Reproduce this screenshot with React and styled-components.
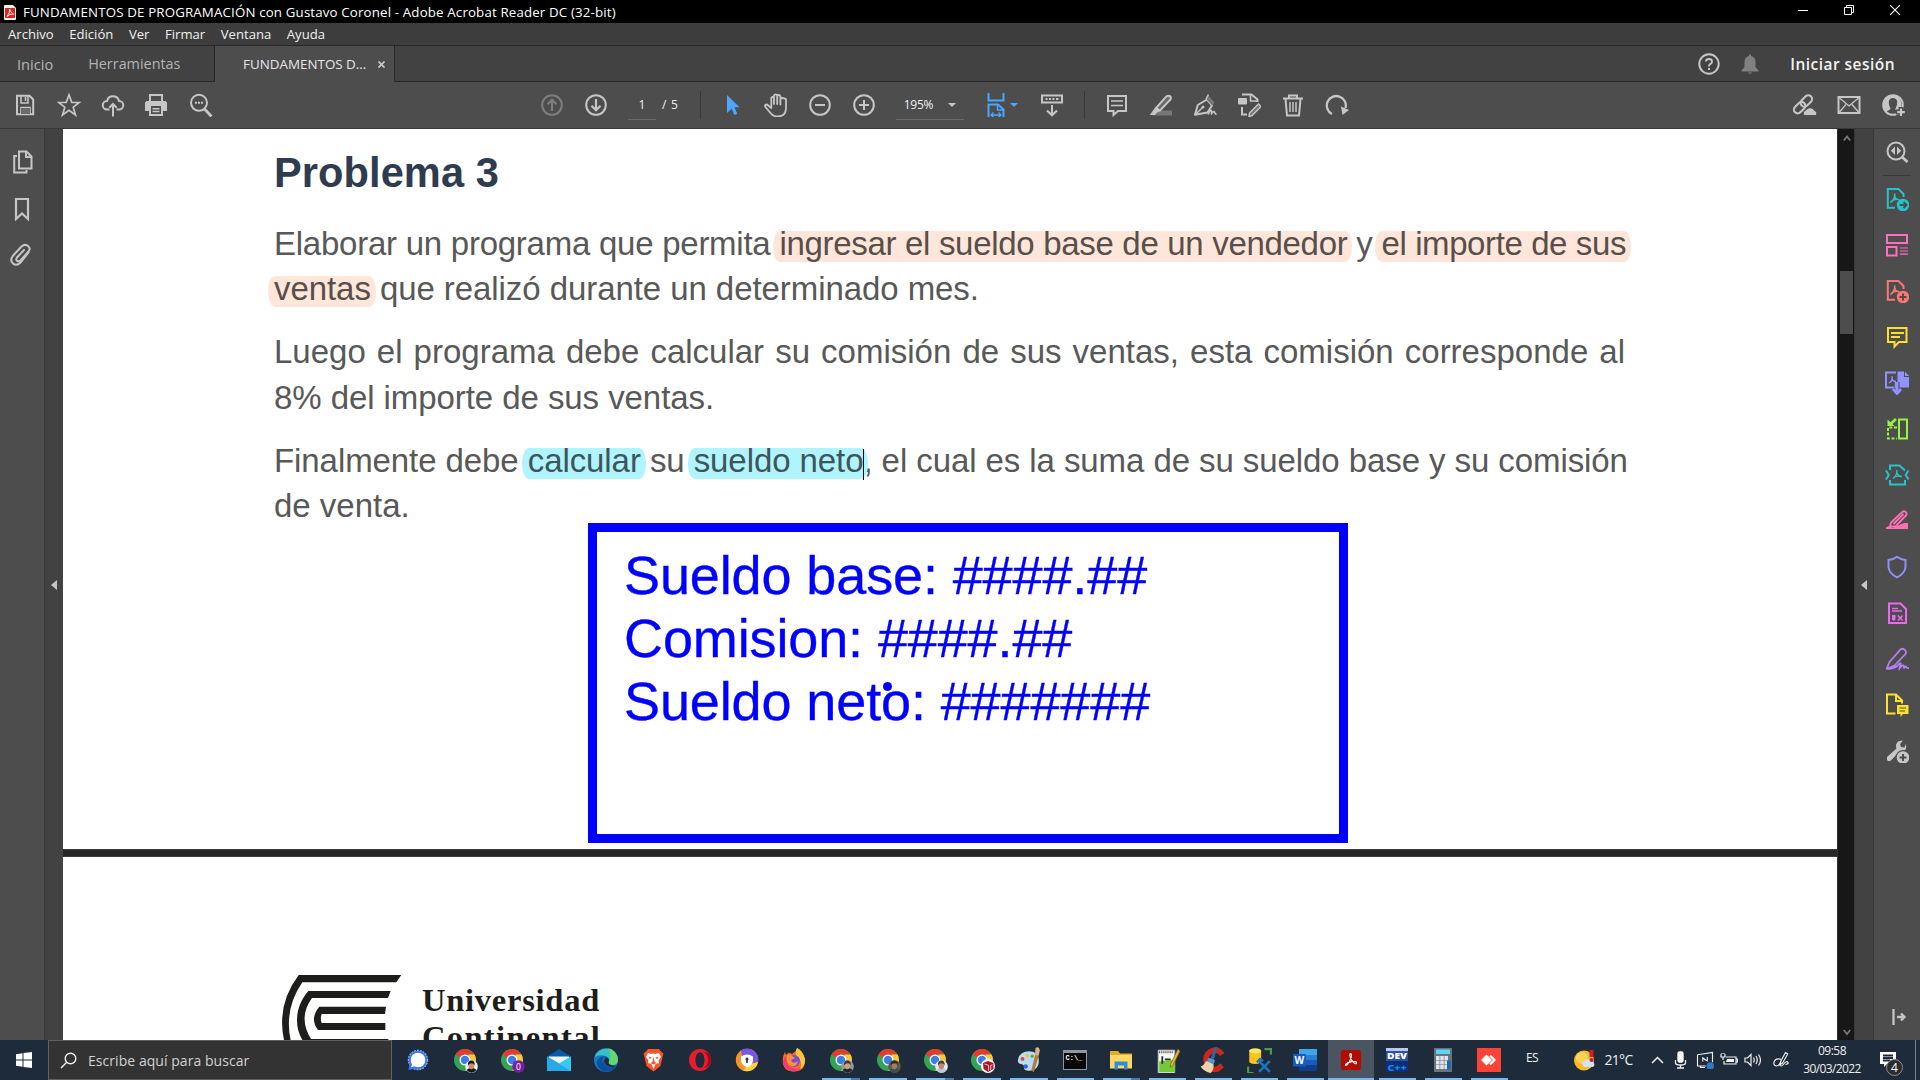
import React from "react";
import styled, { createGlobalStyle, css } from "styled-components";

const GlobalStyle = createGlobalStyle`
  * { box-sizing: border-box; }
  html, body { margin: 0; padding: 0; background: #000; overflow: hidden; }
  h1, p { margin: 0; font-weight: normal; }
`;

const Screen = styled.div`
  width: 1920px;
  height: 1080px;
  display: flex;
  flex-direction: column;
  overflow: hidden;
  font-family: "Open Sans", "Noto Sans", sans-serif;
  font-size: 12px;
  color: #f0f0f0;
  white-space: nowrap;
`;

const Row = styled.div`
  display: flex;
  align-items: center;
`;

const Label = styled.span`
  font-size: ${(p) => p.$size || 12}px;
  letter-spacing: ${(p) => p.$track || 0}px;
  color: ${(p) => p.$color || "inherit"};
  font-weight: ${(p) => p.$weight || 400};
  line-height: 16px;
`;

/* ---------- window chrome ---------- */

const TitleBar = styled(Row)`
  height: 23px;
  flex: none;
  background: #000;
  padding: 1px 0 0 4px;
  gap: 7px;
  color: #fff;
`;

const WindowButtons = styled(Row)`
  margin-left: auto;
  padding-right: 2px;
  padding-bottom: 4px;
`;

const WindowButton = styled.div`
  width: 46px;
  height: 20px;
  display: flex;
  align-items: center;
  justify-content: center;
`;

const MenuBar = styled(Row)`
  height: 23px;
  flex: none;
  background: #3d3d3d;
  border-bottom: 1px solid #282828;
  padding: 0 0 1px 8px;
  gap: 15.6px;
`;

const TabBar = styled.div`
  height: 36px;
  flex: none;
  display: flex;
  background: #424242;
`;

const TabGroup = styled(Row)`
  width: 215px;
  padding: 0 0 0 17px;
  gap: 35px;
  border-right: 1px solid #282828;
  border-bottom: 1px solid #282828;
`;

const ActiveTab = styled(Row)`
  width: 180px;
  padding: 0 9px 0 28px;
  justify-content: space-between;
  background: #4d4d4d;
  border-right: 1px solid #282828;
`;

const TabBarRest = styled(Row)`
  flex: 1;
  justify-content: flex-end;
  padding-right: 25px;
  border-bottom: 1px solid #282828;
`;

const ToolBar = styled(Row)`
  height: 47px;
  flex: none;
  background: #4d4d4d;
  border-bottom: 1px solid #383838;
  padding-left: 3px;
`;

const ToolCell = styled.div`
  width: ${(p) => p.$w || 44}px;
  height: ${(p) => p.$h || 46}px;
  flex: none;
  display: flex;
  align-items: center;
  justify-content: center;
  color: ${(p) => p.$color || "#c6c6c6"};
`;

const Space = styled.div`
  width: ${(p) => p.$w}px;
  flex: none;
`;

const Filler = styled.div`
  flex: 1;
`;

const Separator = styled.div`
  width: 1px;
  height: 28px;
  background: #383838;
`;

const Field = styled(Row)`
  width: ${(p) => p.$w}px;
  height: 29px;
  padding-top: 1px;
  justify-content: ${(p) => (p.$between ? "space-between" : "center")};
  padding-left: ${(p) => (p.$between ? 8 : 0)}px;
  padding-right: ${(p) => (p.$between ? 8 : 0)}px;
  border-bottom: 1px solid #6a6a6a;
`;

const Caret = styled.i`
  border: 4px solid transparent;
  border-top-color: ${(p) => p.$color || "#c6c6c6"};
  border-bottom: 0;
`;

/* ---------- workspace ---------- */

const Workspace = styled.div`
  height: 911px;
  flex: none;
  display: flex;
  background: #424242;
`;

const SideNav = styled.div`
  width: 45px;
  padding-top: 10px;
  background: #4d4d4d;
  border-right: 1px solid #383838;
`;

const Gutter = styled.div`
  width: ${(p) => p.$w}px;
  display: flex;
  align-items: center;
  justify-content: center;
`;

const Arrow = styled.i`
  border: 5px solid transparent;
  border-right: 6px solid #c6c6c6;
  border-left: 0;
`;

const Viewer = styled.div`
  position: relative;
  width: 1774px;
  display: flex;
  flex-direction: column;
  background: #262626;
  overflow: hidden;
`;

const FirstPage = styled.div`
  height: 720px;
  flex: none;
  padding: 20px 0 0 211px;
  background: #fff;
  font-family: "Liberation Sans", Arial, sans-serif;
`;

const PageGap = styled.div`
  height: 8px;
  flex: none;
  background: #262626;
  border: solid #403c3e;
  border-width: 1px 0;
`;

const SecondPage = styled.div`
  height: 183px;
  flex: none;
  display: flex;
  align-items: flex-start;
  padding: 118px 0 0 218px;
  gap: 20px;
  background: #fff;
  overflow: hidden;
`;

const Heading = styled.h1`
  font-size: 41.6px;
  line-height: 48px;
  font-weight: 700;
  letter-spacing: 0.07px;
  color: #2f3c50;
`;

const Paragraph = styled.p`
  width: 1353px;
  margin-top: ${(p) => p.$gap}px;
  font-size: 33px;
  line-height: ${(p) => p.$leading}px;
  color: #585858;
`;

const Line = styled.span`
  display: block;
  width: ${(p) => p.$w || 1353}px;
  ${(p) => p.$fill && css`text-align-last: justify;`}
  letter-spacing: ${(p) => p.$track || 0}px;
`;

const Mark = styled.span`
  position: relative;
  isolation: isolate;
  ${(p) => p.$track && css`letter-spacing: ${p.$track}px;`}
  color: ${(p) => (p.$cyan ? "#3d565a" : "#584f4b")};
  &::before {
    content: "";
    position: absolute;
    z-index: -1;
    top: 6px;
    bottom: 0;
    left: -6px;
    right: -5px;
    border-radius: 7px / 15px;
    background: ${(p) => (p.$cyan ? "#b0f4ff" : "#ffe6da")};
  }
  ${(p) =>
    p.$caret &&
    css`
      &::after {
        content: "";
        position: absolute;
        right: -1px;
        top: 7px;
        width: 1px;
        height: 31px;
        background: #000;
      }
    `}
`;

const Annotation = styled.div`
  position: absolute;
  left: 525px;
  top: 394px;
  width: 760px;
  height: 320px;
  padding: 12px 0 0 27px;
  border: 9px solid #0000ff;
  font: 54px/63px "Liberation Sans", Arial, sans-serif;
  letter-spacing: -0.12px;
  -webkit-text-stroke: 0.35px #0000ff;
  color: #0000ff;
`;

const PenDot = styled.i`
  position: absolute;
  left: 286px;
  top: 150px;
  width: 9px;
  height: 9px;
  border-radius: 50%;
  background: #0000ff;
`;

const University = styled.div`
  padding-top: 7px;
  font: 700 32.5px/37px "Liberation Serif", "Times New Roman", serif;
  color: #1d1d1b;
`;

const UniversityLine = styled.div`
  letter-spacing: ${(p) => p.$track}px;
`;

const ScrollTrack = styled.div`
  width: 18px;
  padding: 6px 1px 4px 2px;
  display: flex;
  flex-direction: column;
  align-items: center;
  background: #171717;
  border-right: 1px solid #383838;
  border-left: 1px solid #303030;
`;

const Thumb = styled.div`
  align-self: stretch;
  height: 63px;
  margin: 129px 0 auto;
  background: #4d4d4d;
`;

const ToolsPane = styled.div`
  flex: 1;
  display: flex;
  flex-direction: column;
  align-items: center;
  background: #4d4d4d;
  border-left: 1px solid #383838;
`;

const PaneRule = styled.div`
  width: 28px;
  height: 1px;
  background: #383838;
`;

/* ---------- taskbar ---------- */

const TaskBar = styled.div`
  height: 40px;
  flex: none;
  display: flex;
  background: #1d2b3a;
`;

const SearchBox = styled(Row)`
  width: 344px;
  height: 40px;
  padding: 1px 0 0 11px;
  gap: 11px;
  background: #333;
  border: 1px solid #606060;
  margin-right: 2px;
`;

const TaskApp = styled.div`
  width: ${(p) => p.$w}px;
  height: 40px;
  display: flex;
  align-items: center;
  justify-content: center;
  padding-left: ${(p) => (p.$w > 46 ? 1 : 0)}px;
  position: relative;
  background: ${(p) => (p.$active ? "#4a5561" : "transparent")};
`;

const RunningBar = styled.i`
  position: absolute;
  bottom: 0;
  left: ${(p) => (p.$active ? 0 : 5)}px;
  right: ${(p) => (p.$active ? 0 : 4)}px;
  height: 2px;
  background: ${(p) =>
    p.$stacked ? "linear-gradient(90deg, #76b9ed 77%, #4b7ca4 77%)" : "#76b9ed"};
`;

const TrayCell = styled.div`
  width: ${(p) => p.$w || 24}px;
  height: 40px;
  flex: none;
  display: flex;
  align-items: center;
  justify-content: center;
  padding-bottom: ${(p) => p.$up || 0}px;
`;

const Clock = styled.div`
  width: 72px;
  flex: none;
  padding-top: 3px;
  display: flex;
  flex-direction: column;
  gap: 2px;
  align-items: center;
`;

const Notification = styled.div`
  position: relative;
  width: 48px;
  height: 40px;
  flex: none;
  padding: 12px 0 0 12px;
  border-right: 1px solid #7b8590;
`;

const Badge = styled.span`
  position: absolute;
  left: 18px;
  top: 19px;
  width: 17px;
  height: 17px;
  border-radius: 50%;
  border: 1px solid #8a8f95;
  background: #2a2c30;
  font-size: 12px;
  line-height: 15px;
  text-align: center;
  color: #fff;
`;

/* ---------- drawings ---------- */

const Drawing = styled.svg`
  display: block;
  flex: none;
`;

const Svg = ({ size = 24, w, h, sw = 2, box = "0 0 24 24", children, ...rest }) => (
  <Drawing
    width={w || size}
    height={h || size}
    viewBox={box}
    fill="none"
    stroke="currentColor"
    strokeWidth={sw}
    {...rest}
  >
    {children}
  </Drawing>
);

const solid = { fill: "currentColor", stroke: "none" };
const acro = "M5.500 15.500C8 14 10 10.500 9.700 6.500M9.700 8.500C10 11 12 12.700 14.500 12.700M6 14.500C8 12.800 11 12 13.500 12.500";

const glyphs = {
  save: (
    <>
      <path d="M4 2.800H16.500L20.200 6.500V21.200H4Z" />
      <path d="M8 3V10H15V3M8 21V14.500H17V21" strokeWidth="1.600" />
      <path d="M12.500 4V8" strokeWidth="1.500" />
      <path d="M8 15H17V21H8Z" fill="#6c6c6c" stroke="none" />
    </>
  ),
  star: <path strokeWidth="1.700" d="M12 1.800L14.700 9.300L22.300 9.500L16.200 14.200L18.500 22L12 17.400L5.500 22L7.800 14.200L1.700 9.500L9.300 9.300Z" />,
  cloud: <path d="M8.500 16.500H6A4.200 4.200 0 0 1 6 8A6.200 6.200 0 0 1 18 8A4.200 4.200 0 0 1 18 16.500H15.500M12 23.500V11M8.300 14.700L12 11L15.700 14.700" />,
  print: (
    <g {...solid} transform="translate(-1 0)">
      <path d="M5 1H19V8H5ZM7 3V8H17V3Z" fillRule="evenodd" />
      <path fillRule="evenodd" d="M2.500 8H21.500L23 9.500V18H19V23H5V18H1V9.500ZM7 13V21H17V13Z" />
      <path d="M8.500 15H15.500V16.400H8.500ZM8.500 17.800H15.500V19.200H8.500Z" />
    </g>
  ),
  find: (
    <>
      <circle cx="10" cy="9.800" r="8" />
      <path d="M15.500 16L22.500 23.500" strokeWidth="2.800" />
      <path d="M6 9.800H8M9 9.800H11M12 9.800H14" />
    </>
  ),
  up: <><circle cx="12" cy="12" r="9.800" /><path d="M12 18V7M7.500 11.300L12 6.800L16.500 11.300" strokeWidth="2.200" /></>,
  down: <><circle cx="12" cy="12" r="9.800" /><path d="M12 6V17M7.500 12.700L12 17.200L16.500 12.700" strokeWidth="2.200" /></>,
  pointer: <path {...solid} d="M7 2L19.500 14.300H14.500L17.300 20.700L14.300 22L11.600 15.800L7 20Z" />,
  hand: <path strokeWidth="1.800" strokeLinejoin="round" strokeLinecap="round" d="M7.300 15V5.500Q7.300 3.800 8.600 3.800T10 5.500V11M10 11V3Q10 1.300 11.500 1.300T13.200 3V11M13.200 11V3.300Q13.300 2 14.700 2T16.400 3.500V11.500M16.400 11.500V6.500Q16.600 5 18 5T22 6V15Q22 23.500 13.500 23.500Q9 23.500 6.500 20L1 13.500Q.8 11.500 3 11.500L7.300 15" />,
  minus: <><circle cx="12" cy="12" r="9.800" /><path d="M7 12H17" /></>,
  plus: <><circle cx="12" cy="12" r="9.800" /><path d="M7 12H17M12 7V17" /></>,
  fit: (
    <>
      <path d="M4.500 0V7.500H19.500V0M4.500 24.500V11.500H14L19.500 16.500V24.500" strokeWidth="2" />
      <path d="M13.500 12V17H19" strokeWidth="1.500" />
      <path d="M7 22H17M9.500 19.500L7 22L9.500 24.300M14.500 19.500L17 22L14.500 24.300" strokeWidth="1.400" />
    </>
  ),
  scroll: (
    <>
      <path d="M2 2.500H22V9.500H2Z" />
      <path d="M5.500 6H7.500M9 6H11M12.500 6H14.500M16 6H18.500" />
      <path d="M12 12V22M7 17.500L12 22.300L17 17.500" />
    </>
  ),
  comment: <><path d="M3 3H21V18H13L8.500 22V18H3Z" /><path d="M6 8H18M6 12.500H18" strokeWidth="1.400" /></>,
  marker: (
    <>
      <path d="M8 17.500H23V22.500H4Z" fill="#777" stroke="none" />
      <path d="M20.500 3Q22.500 4 21.500 6.500L11 17.500L7 15L16.500 4.300Q18.500 2 20.500 3Z" fill="#6a6a6a" />
      <path {...solid} d="M6.500 14L11.500 18L8 19.500L6 22H.8Z" />
    </>
  ),
  sign: (
    <>
      <path d="M2 21.800L4.800 12L14 6.500L19 12.500L14.500 19.500Z" strokeLinejoin="round" />
      <path d="M2.500 21.500L9.500 14.500" strokeWidth="1.400" />
      <circle cx="10" cy="14" r="1.500" {...solid} />
      <path d="M14.500 1.500L21.500 9.500L19 12.500L12.800 5.500Z" fill="#777" stroke="none" />
      <path d="M13 6L15.500 1.500M15 21.500Q18 15.500 18.500 18T18 21.500Q21 17 21.500 19T23.500 21.500" strokeWidth="1.500" />
    </>
  ),
  edit: (
    <>
      <path d="M5 1.500H14.500L20.500 6.500V9M5 14V21.500H10" />
      <path d="M13.500 2V8H20" strokeWidth="1.600" />
      <rect x="1" y="5" width="9" height="6.500" rx="1" {...solid} />
      <path d="M21.500 11L24 13.500L15 22.500L12 23.500L12.500 20Z" fill="#777" strokeWidth="1.500" />
    </>
  ),
  trash: <><path d="M2 5.500H22M8 5V2.500H16V5M4.500 6L6 22.500H18L19.500 6" /><path d="M9 9V19M12 9V19M15 9V19" strokeWidth="1.500" /></>,
  rotate: <><path d="M7 21A9.500 9.500 0 1 1 20.500 15" strokeWidth="2.300" /><path {...solid} d="M24 17L16 13.500L17.500 22Z" /></>,
  link: (
    <>
      <g transform="rotate(-45 10 11)" strokeWidth="2.100">
        <rect x="-1.500" y="7.500" width="13" height="7.500" rx="3.700" />
        <rect x="8" y="7.500" width="13" height="7.500" rx="3.700" />
      </g>
      <path d="M11 22.500A3.500 3.500 0 0 1 13 17A4.800 4.800 0 0 1 21.500 17.500A3 3 0 0 1 23 22.500Z" fill="currentColor" stroke="#4d4d4d" strokeWidth="1" />
    </>
  ),
  mail: <><path d="M1.500 4H22.500V20H1.500Z" /><path d="M2.500 5L12 13L21.500 5M2.500 19L9 11.500M21.500 19L15 11.500" strokeWidth="1.300" /></>,
  user: (
    <g transform="translate(1 0)">
      <circle cx="11" cy="12" r="9.800" />
      <path {...solid} fillRule="evenodd" d="M11 2A10 10 0 0 0 3.500 18.500Q8.500 17 8.500 15.500Q6.500 12 6.800 8.500Q7.500 5 11 5T15.200 8.500Q15.500 12 13.500 15.500V17L17 18.500A10 10 0 0 0 11 2Z" />
      <path d="M19 14V23.500M14 19H24" stroke="#4d4d4d" strokeWidth="5" />
      <path d="M19 15.500V23M15.200 19.200H22.800" strokeWidth="2.200" />
    </g>
  ),
  help: (
    <>
      <circle cx="12" cy="12" r="9.700" />
      <path d="M9 9.500Q9 7 12 7T15 9.400Q15 11 13.400 11.800T12 14.500" strokeWidth="1.900" />
      <path d="M12 16V18" />
    </>
  ),
  bell: <path {...solid} d="M11 2.500H13V4Q17.500 5 17.500 10V15L20.500 18.500V19.500H3.500V18.500L6.500 15V10Q6.500 5 11 4ZM9.500 20.500H14.500L12 22Z" />,
  pages: (
    <>
      <path d="M8 1.500H15.500L20.500 6.500V18.500H8ZM15 2V7H20" />
      <path d="M6 6H3.200V22.500H15.500V20" />
    </>
  ),
  bookmark: <path d="M5 2H17V22L11 16.500L5 22Z" strokeWidth="2.200" />,
  clip: <path strokeLinecap="round" d="M18.500 9.500L10.500 19.500Q6.500 23.500 3 20.500T2.800 13L11.500 3.500Q15 .500 18 3T18.500 8.500L10.500 17.500Q8.500 19 7 17.700T7 14.500L14 7" />,
  searchTools: (
    <>
      <circle cx="11" cy="11" r="8.500" />
      <path d="M17 17L22.500 22" strokeWidth="2.800" />
      <path {...solid} d="M10 6.500V15L5.800 10.800ZM12 6.500V15L16.200 10.800Z" />
    </>
  ),
  exportPdf: (
    <>
      <path d="M10 20.800H2.800V2H13.500L18.500 7V10" /><path d={acro} strokeWidth="1.500" />
      <circle cx="18" cy="18" r="6.200" {...solid} />
      <path d="M14.500 18H21M18.500 15L21.500 18L18.500 21" stroke="#4d4d4d" />
    </>
  ),
  organize: <><path d="M2 2H22V10H2ZM2 14H11.500V22.500H2Z" /><path d="M15 15H23M15 18H23M15 21.200H23" strokeWidth="1.200" /></>,
  createPdf: (
    <>
      <path d="M10 20.800H2.800V2H13.500L18.500 7V10" /><path d={acro} strokeWidth="1.500" />
      <circle cx="18" cy="18" r="6.200" {...solid} />
      <path d="M14.500 18H21.500M18 14.500V21.500" stroke="#4d4d4d" />
    </>
  ),
  note: <><path d="M3 3H21.500V17H14L9.500 21.500V17H3Z" /><path d="M6 8H19M6 12H15" strokeWidth="1.800" /></>,
  combine: (
    <>
      <path d="M9 16.500H1V1.500H11" /><path d="M4 12C6 11 7.500 8 7 5M7 8Q8 10.500 11 10.500" strokeWidth="1.300" />
      <path {...solid} d="M12.500 .5H19V6H24V16.500H14.500V11H9.700V17H12.500Z" /><path {...solid} d="M20 .5L24 5H20Z" />
      <path d="M12 11V21M8 18L12 22.500L16 18" strokeWidth="2.800" />
    </>
  ),
  compress: (
    <>
      <path d="M14 2.500H22V21.500H14Z" />
      <path d="M12 10.500H3V21.500H12" strokeDasharray="3 1.700" />
      <path d="M11 2L5 7.500" strokeWidth="2.500" /><path {...solid} d="M2.500 2.500V9H9.500Z" />
    </>
  ),
  protectPdf: (
    <>
      <path d="M5 7V2.500H14.500L20 7.500M5 17V21.500H20V17M1 7.500L3.800 12L1 16.500M23.500 7.500L20.700 12L23.500 16.500" />
      <path d="M8 15.500Q12 13 12 7M12 10Q13 13 17 13.500M9 14Q13 12.500 16.500 13.500" strokeWidth="1.400" />
    </>
  ),
  redact: (
    <>
      <path d="M20.500 2.800Q22.500 4 21 6.500L10.500 17.500L5 17.500L6 13.500L16.500 3.700Q18.500 1.500 20.500 2.800ZM8.500 15L18.500 5" strokeWidth="1.900" />
      <path {...solid} d="M5 16.500L7.500 19L19 14H23V20H1V18.500Z" />
    </>
  ),
  shield: <path d="M12 1.800Q16 5 20.500 5V12Q20 18.500 12 22.300Q4 18.500 3.500 12V5Q8 5 12 1.800Z" />,
  form: (
    <>
      <path d="M4 2.500H15.500L21 8V22H4Z" />
      <path d="M7 7.500H13M7 10H17" strokeWidth="1.300" />
      <path d="M7 14H10.500V18.500L8.700 20L7 18.500Z" {...solid} /><path d="M13 14.500L17.500 19.500M17.500 14.500L13 19.500" strokeWidth="1.600" />
    </>
  ),
  fillSign: <path d="M1.500 22L4.500 15L15.500 2.500Q18 .8 20 3T20 7.500L9.500 18.500L1.500 22Q11 22 14.500 16.500Q16.500 15.500 15.500 18T14.500 21.500Q17.500 17.500 18.500 18.500T18.500 21.500Q21 18.500 21.200 20T24 21" strokeWidth="1.800" />,
  sendNote: (
    <>
      <path d="M10.500 20.500H2V1.500H11L17 7.500V10.500M11 2V8H17" />
      <path {...solid} d="M12 12H23.500V21H18L15.500 24V21H12Z" /><path d="M14.500 15H21M14.500 18H20" stroke="#4d4d4d" strokeWidth="1.200" />
    </>
  ),
  moreTools: (
    <>
      <path {...solid} d="M2 18L11.500 9.500Q9.500 5 14 2L18 1.500L15 5L16 8L19.500 8.500L20.500 5Q23 11 17 13L14 13L6 21.500Q3 23 2 21Z" />
      <circle cx="18" cy="18.500" r="7.500" fill="#4d4d4d" stroke="none" />
      <circle cx="18" cy="18.500" r="6.300" {...solid} /><path d="M14.500 18.500H21.500M18 15V22" stroke="#4d4d4d" />
    </>
  ),
  expand: (
    <>
      <path d="M8.500 4V20" strokeWidth="2.300" />
      <path d="M12 12H19.500M16 8.500L19.500 12L16 15.500" strokeWidth="2.300" />
    </>
  ),
};

const Glyph = ({ name, size = 24 }) => <Svg size={size}>{glyphs[name]}</Svg>;

const Chrome = ({ children }) => (
  <Svg size={26} box="-1 -1 26 26" stroke="none">
    <circle cx="12" cy="12" r="11" fill="#34a353" />
    <path d="M12 12L2.500 6.500A11 11 0 0 1 21.500 6.500H12Z" fill="#e33b2e" />
    <path d="M21.500 6.500A11 11 0 0 1 12 23L17 14.500L15.500 6.500Z" fill="#fcc934" />
    <circle cx="12" cy="12" r="5.500" fill="#fff" />
    <circle cx="12" cy="12" r="4.200" fill="#3b7ded" />
    {children}
  </Svg>
);

const Portrait = ({ bg, hair, skin, suit }) => (
  <>
    <circle cx="18.500" cy="18.500" r="6.300" fill={bg} />
    <path d="M13.500 22Q18.500 17 23.500 22Q18.500 27.500 13.500 22Z" fill={suit} />
    <ellipse cx="18.300" cy="17.500" rx="2.900" ry="3.800" fill={skin} />
    <path d="M15 17.500Q14.500 12.500 18.300 12.500T21.700 17.500Q20.500 15 18.300 15.300T15 17.500Z" fill={hair} />
  </>
);

const svgText = { fontFamily: "Open Sans, sans-serif", stroke: "none" };

const art = {
  signal: (
    <Svg size={22}>
      <circle cx="12" cy="12" r="10.500" fill="#3a76f0" stroke="#8fb3f9" strokeWidth="1.300" strokeDasharray="2 1.200" />
      <path d="M1.500 23L3 16L9 21.500Z" fill="#3a76f0" stroke="none" />
      <circle cx="12" cy="12" r="8" fill="#fff" stroke="none" /><path d="M4.500 20L6 15L9 18.500Z" fill="#fff" stroke="none" />
    </Svg>
  ),
  chromeA: <Chrome><Portrait bg="#f2f2f2" hair="#1b1613" skin="#c98f6f" suit="#17191d" /></Chrome>,
  chromeO: (
    <Chrome>
      <circle cx="18.500" cy="18.500" r="6.200" fill="#7b1fa2" />
      <text x="18.500" y="21.700" fontSize="8.500" fill="#fff" textAnchor="middle" {...svgText}>0</text>
    </Chrome>
  ),
  mail: (
    <Svg w={24} h={24} stroke="none">
      <path d="M0 8.500L12 1L24 8.500V22H0Z" fill="#0a5aa8" /><path d="M2 8.500H22V16H2Z" fill="#f4f6f8" />
      <path d="M0 8.500L12 15.500L0 23Z" fill="#1c8de0" /><path d="M0 23L24 8.500V23Z" fill="#33c3f5" /><path d="M0 8.500L12 15.800L24 23H0Z" fill="#27a8ea" />
      <path d="M12 15.600L24 8.500V23Z" fill="#35c9f8" />
    </Svg>
  ),
  edge: (
    <Svg size={24} stroke="none">
      <circle cx="12" cy="12" r="12" fill="#1577c9" />
      <path d="M.5 9.500A12 12 0 0 1 24 11.500Q24 16.500 19 17Q14.500 17 14.500 14.500Q17 10.500 11.500 8Q5 6 .5 9.500Z" fill="#34bfc9" />
      <path d="M14 .3A12 12 0 0 1 24 12Q23.500 16.500 19 17Q14.500 17 14.500 14.500Q18.500 8 14 .3Z" fill="#66d66a" />
      <path d="M8 15.500Q8 9.500 12.500 8.800Q6 7.500 3 12.500Q1.500 19 9.500 23.500Q18 25 22 18Q17 20.500 13 18.500T10 12Q8 13.500 8 15.500Z" fill="#0c4fa1" />
      <path d="M12.500 9Q9.500 10.500 10.300 14.500T19.500 19.500L22.500 17.500Q19.500 18 17 17T14.500 14.500Q16.500 11.500 12.500 9Z" fill="#1d2b3a" />
    </Svg>
  ),
  brave: (
    <Svg w={21} h={24} box="0 0 21 24" stroke="none">
      <path d="M5 1H16L18 3.500L20.500 5.500L19.500 9L17.500 18L10.500 23.500L3.500 18L1.500 9L.5 5.500L3 3.500Z" fill="#fb542b" />
      <path d="M5 5L8.500 6L10.500 5.500L12.500 6L16 5L18 9L15.500 12.500L16 15L12.500 16L10.500 21L8.500 16L5 15L5.500 12.500L3 9Z" fill="#fff" />
      <path d="M5.500 8.500L8.500 9.500L7 11.500ZM15.500 8.500L12.500 9.500L14 11.500ZM10.500 9L11.700 14L13.500 15L10.500 16.500L7.500 15L9.300 14Z" fill="#fb542b" />
    </Svg>
  ),
  opera: (
    <Svg size={24} stroke="none">
      <path fillRule="evenodd" fill="#e81c2e" d="M12 1A11 11 0 1 0 12 23A11 11 0 1 0 12 1ZM12 4.200C15 4.200 16.500 8 16.500 12S15 19.800 12 19.800S7.500 16 7.500 12S9 4.200 12 4.200Z" />
      <path d="M14 3Q20 5 20 12T14 21Q22.500 19 23 12T14 3Z" fill="#a70014" />
    </Svg>
  ),
  securebrowser: (
    <Svg size={24} stroke="none">
      <circle cx="12" cy="12" r="11.200" fill="#f79327" /><path d="M6 2.500A11.200 11.200 0 0 1 23 14L16 16L7 8Z" fill="#7657e8" />
      <path d="M23 14A11.200 11.200 0 0 1 8 22.500L15 16Z" fill="#ffd23d" />
      <path d="M6 8.500Q12 4.500 18 8.500V13Q17 17.500 12 19.500Q7 17.500 6 13Z" fill="#fff" />
      <path d="M12 9.500A1.600 1.600 0 0 1 13 12.300L12.700 15H11.300L11 12.300A1.600 1.600 0 0 1 12 9.500Z" fill="#323264" />
    </Svg>
  ),
  firefox: (
    <Svg size={24} stroke="none">
      <path d="M3 4L4 7L7 4.500L10 6L14 3L15 0Q21 3 23 11Q23.500 23.500 12 23.500T.8 12Q1 7 3 4Z" fill="#ff6b2c" />
      <path d="M15 0Q21 3 23 11Q23.500 18 18 21.500Q21 13 15.500 9Q12 5 15 0Z" fill="#ffc83a" />
      <path d="M1 14Q3 23.500 12 23.500Q17 23 20 20Q12 22 7 18Q4 14 4 8Q1 11 1 14Z" fill="#f43a73" />
      <circle cx="12" cy="13" r="6" fill="#7a4fd8" /><path d="M5 7.500Q8 6 10 8L13 10L9 12L10 14Q13 16 16 13Q15 19 10 18T5 12Z" fill="#ff9136" />
    </Svg>
  ),
  chromeB: <Chrome><Portrait bg="#8c9aa4" hair="#3d3a38" skin="#d59b79" suit="#20242d" /></Chrome>,
  chromeC: <Chrome><Portrait bg="#5e5a45" hair="#332b22" skin="#9f7d5f" suit="#3e4d55" /></Chrome>,
  chromeD: <Chrome><Portrait bg="#e6ecf3" hair="#4c4039" skin="#c8876d" suit="#b9c9e0" /></Chrome>,
  chromeE: (
    <Chrome>
      <circle cx="18" cy="18" r="7" fill="#fff" />
      <path d="M13 15L18 13L23.500 15V21L18 24L13.500 21Z" fill="#b51227" /><path d="M14.500 16L18.500 17.300V22.500M20.700 22V17.500L22.500 16.800" stroke="#fff" strokeWidth=".8" />
    </Chrome>
  ),
  paint: (
    <Svg size={26} stroke="none">
      <path d="M2 11Q4 4 12 4T21 11Q22 21 12 22Q7 22 7.500 19T3.500 15.500Q1 14 2 11Z" fill="#b9dcf2" />
      <circle cx="6" cy="11" r="1.800" fill="#e3443a" /><circle cx="10.500" cy="8" r="1.700" fill="#f6c636" /><circle cx="15" cy="8.500" r="1.600" fill="#54af4c" /><circle cx="9" cy="18" r="2" fill="#3767c7" />
      <path d="M19.500 0Q23 2 21 8L16.500 23Q14 22 14.500 20Z" fill="#b8793b" /><path d="M18 1Q21-1 22 3L20.500 8L17.500 7Z" fill="#d9b381" />
    </Svg>
  ),
  terminal: (
    <Svg w={24} h={20} box="0 0 24 20" stroke="none">
      <rect width="24" height="20" fill="#8e979d" /><rect x="1" y="3" width="22" height="16" fill="#080808" />
      <text x="2.500" y="10" fontSize="7" fontWeight="700" fill="#fff" fontFamily="Liberation Mono, monospace">C:\_</text>
    </Svg>
  ),
  folder: (
    <Svg size={24} stroke="none">
      <path d="M1 3H9L11 5.500H23V20H1Z" fill="#e9a92d" /><path d="M1 7H23V20.500H1Z" fill="#ffd766" />
      <path d="M5.500 21.500V13.500H18.500V21.500H15V17.500H9V21.500Z" fill="#2f8fdb" />
    </Svg>
  ),
  notepad: (
    <Svg size={25} stroke="none">
      <path d="M3 2H19V24H3Z" fill="#f4f7f0" stroke="#a6aea0" strokeWidth=".8" /><path d="M4 13L19 11V23H4Z" fill="#73c937" />
      <path d="M4 4H18" stroke="#444" strokeDasharray="1 1" /><path d="M7 8V15M9.500 11H15" stroke="#24321d" strokeWidth="1.700" />
      <path d="M22 1L24 3L17 17L14.500 18.500L15 15.500Z" fill="#f0b429" stroke="#705619" strokeWidth=".6" />
    </Svg>
  ),
  cleaner: (
    <Svg size={26} stroke="none">
      <path d="M20.500 7Q16 .5 10 4T6 15Q9 22 16 20.500L20.500 17" stroke="#c9281f" strokeWidth="5" />
      <path d="M14 0L16 1L12.500 12L9.500 11Z" fill="#2c69aa" /><path d="M8 10L14 12L12.500 16L6 14Z" fill="#5297d3" /><path d="M5.500 13L12.500 16Q13 21 10 24Q4 23 .5 18Q4 17 5.500 13Z" fill="#f0d3a6" />
    </Svg>
  ),
  dbtool: (
    <Svg size={26} stroke="none">
      <path d="M3 3V14Q8 17.500 14 14V3Z" fill="#f7c51e" /><ellipse cx="8.500" cy="3.500" rx="5.500" ry="2.300" fill="#ffe46b" />
      <path d="M17 2H23V7M2 18V24H7" stroke="#4d9a44" strokeWidth="2" />
      <path d="M12 13L22 23M22 13L12 23" stroke="#1f72bd" strokeWidth="2.400" /><path d="M10 14L13 11L16 13" stroke="#1f72bd" strokeWidth="2" />
    </Svg>
  ),
  word: (
    <Svg size={24} stroke="none">
      <path d="M6 1H24V7H6Z" fill="#41a5ee" /><path d="M6 7H24V12H6Z" fill="#2b7cd3" /><path d="M6 12H24V17H6Z" fill="#185abd" /><path d="M6 17H24V23H6Z" fill="#103f91" />
      <rect y="6" width="13" height="12.500" rx="1" fill="#185abd" /><text x="6.400" y="16" fontSize="10" fontWeight="700" fill="#fff" textAnchor="middle" {...svgText}>W</text>
    </Svg>
  ),
  acrobat: (
    <Svg w={22} h={22} stroke="none">
      <rect x="1" y="1" width="22" height="22" rx="3.500" fill="#b30b00" />
      <path d="M11.500 5Q13 5 12.300 8.500Q11 14 7.500 17.500Q5.500 18.500 6 16.800Q8 14.500 13 13.800T18 15Q18.500 16.800 16 15.800Q12.500 13.500 11.200 9Q10.300 5 11.500 5Z" stroke="#fff" strokeWidth="1.200" fill="none" />
    </Svg>
  ),
  devcpp: (
    <Svg size={24} stroke="none">
      <rect x="1" y="0" width="22" height="24" rx="1" fill="#2c52a8" /><path d="M1 13H23V24H1Z" fill="#0c2f7d" /><path d="M1 0H23V3H1Z" fill="#b9c8ee" />
      <text x="12" y="10.500" fontSize="8.500" fontWeight="800" textAnchor="middle" textLength="20" lengthAdjust="spacingAndGlyphs" fill="#fff" fontFamily="Open Sans, sans-serif">DEV</text>
      <text x="12" y="22.500" fontSize="8.500" fontWeight="800" textAnchor="middle" textLength="19" lengthAdjust="spacingAndGlyphs" fill="#1f86dc" {...svgText}>C++</text>
    </Svg>
  ),
  calc: (
    <Svg w={18} h={24} box="0 0 18 24" stroke="none">
      <rect width="18" height="24" fill="#68737c" /><rect x="2" y="1.500" width="14" height="4.500" fill="#5dd4f4" />
      {[8, 12.500, 17].map((y) => [2, 6.200, 10.400].map((x) => <rect key={x + "-" + y} x={x} y={y} width="3.600" height="4" fill="#dfe5e9" />))}
      <rect x="13" y="12.500" width="3.600" height="9" fill="#1769b4" />
    </Svg>
  ),
  anydesk: (
    <Svg size={24} stroke="none">
      <rect width="24" height="24" fill="#fd4338" /><path d="M4 12L9.500 6.500L15 12L9.500 17.500Z" fill="#fff" /><path d="M13 7.500L17.500 12L13 16.500" stroke="#fff" strokeWidth="2.200" />
    </Svg>
  ),
};

/* ---------- content ---------- */

const menus = ["Archivo", "Edición", "Ver", "Firmar", "Ventana", "Ayuda"];

const paneTools = [
  ["exportPdf", "#25c3cb"],
  ["organize", "#ff6fbe"],
  ["createPdf", "#ff7578"],
  ["note", "#ffdf2e"],
  ["combine", "#9292ff"],
  ["compress", "#96f442"],
  ["protectPdf", "#25c3cb"],
  ["redact", "#ff6fb4"],
  ["shield", "#9090fa"],
  ["form", "#ec68f0"],
  ["fillSign", "#b47fee"],
  ["sendNote", "#ffdf2e"],
  ["moreTools", "#c6c6c6"],
];

const taskApps = [
  { icon: "signal", w: 47 },
  { icon: "chromeA", w: 47 },
  { icon: "chromeO", w: 47 },
  { icon: "mail", w: 47 },
  { icon: "edge", w: 47 },
  { icon: "brave", w: 47 },
  { icon: "opera", w: 47 },
  { icon: "securebrowser", w: 47 },
  { icon: "firefox", w: 47 },
  { icon: "chromeB", w: 47, running: true, stacked: true },
  { icon: "chromeC", w: 47, running: true },
  { icon: "chromeD", w: 47, running: true, stacked: true },
  { icon: "chromeE", w: 47, running: true },
  { icon: "paint", w: 47, running: true },
  { icon: "terminal", w: 46, running: true },
  { icon: "folder", w: 46, running: true, stacked: true },
  { icon: "notepad", w: 46, running: true },
  { icon: "cleaner", w: 46, running: true },
  { icon: "dbtool", w: 46, running: true },
  { icon: "word", w: 46, running: true },
  { icon: "acrobat", w: 46, running: true, active: true },
  { icon: "devcpp", w: 46, running: true },
  { icon: "calc", w: 46, running: true },
  { icon: "anydesk", w: 46, running: true },
];

const Tool = ({ name, ...rest }) => (
  <ToolCell {...rest}>
    <Glyph name={name} />
  </ToolCell>
);

const Header = () => (
  <>
    <TitleBar>
      <Svg w={12} h={15} box="0 0 12 15" stroke="none">
        <path d="M0 1Q0 0 1 0H9L12 3V14Q12 15 11 15H1Q0 15 0 14Z" fill="#f5f0ef" />
        <path d="M1 3H11V13H1Z" fill="#e2231a" /><path d="M3 11.500Q6 8 5.700 4Q6.500 8 9.500 9Q6 8.500 3 11.500Z" stroke="#fff" strokeWidth=".9" />
      </Svg>
      <Label $size={13.3} $track={0.15}>FUNDAMENTOS DE PROGRAMACIÓN con Gustavo Coronel - Adobe Acrobat Reader DC (32-bit)</Label>
      <WindowButtons>
        <WindowButton><Svg size={10} box="0 0 10 10" sw={1}><path d="M0 5.500H10" /></Svg></WindowButton>
        <WindowButton><Svg size={10} box="0 0 10 10" sw={1}><path d="M.5 2.500H7.500V9.500H.5ZM2.500 2.500V.5H9.500V7.500H7.500" /></Svg></WindowButton>
        <WindowButton><Svg size={10} box="0 0 10 10" sw={1.100}><path d="M0 0L10 10M10 0L0 10" /></Svg></WindowButton>
      </WindowButtons>
    </TitleBar>
    <MenuBar>
      {menus.map((m) => <Label key={m} $size={13.1}>{m}</Label>)}
    </MenuBar>
    <TabBar>
      <TabGroup>
        <Label $size={14.6} $color="#b4b4b4">Inicio</Label>
        <Label $size={14.4} $color="#b4b4b4">Herramientas</Label>
      </TabGroup>
      <ActiveTab>
        <Label $size={13.4} $color="#e6e6e6">FUNDAMENTOS D...</Label>
        <Svg size={7} box="0 0 8 8" sw={2} color="#c6c6c6"><path d="M.5 .5L7.500 7.500M7.500 .5L.5 7.500" /></Svg>
      </ActiveTab>
      <TabBarRest>
        <Tool name="help" $w={41} $h={34} />
        <Tool name="bell" $w={41} $h={34} $color="#808080" />
        <Space $w={20} />
        <Label $size={15.5} $weight={600} $track={0.46} $color="#f2f2f2">Iniciar sesión</Label>
      </TabBarRest>
    </TabBar>
    <ToolBar>
      {["save", "star", "cloud", "print", "find"].map((n) => <Tool key={n} name={n} />)}
      <Space $w={307} />
      <Tool name="up" $color="#7d7d7d" />
      <Tool name="down" />
      <Space $w={10} />
      <Field $w={28}><Label>1</Label></Field>
      <Space $w={6} />
      <Label $track={0.8}>/ 5</Label>
      <Space $w={12} />
      <ToolCell $w={19}><Separator /></ToolCell>
      <Tool name="pointer" $color="#4aa6ff" />
      <Tool name="hand" />
      <Tool name="minus" />
      <Tool name="plus" />
      <Space $w={10} />
      <Field $w={68} $between><Label $track={-0.3}>195%</Label><Caret /></Field>
      <Space $w={20} />
      <ToolCell $w={24} $color="#4aa6ff"><Glyph name="fit" /></ToolCell>
      <Space $w={2} />
      <Caret $color="#4aa6ff" />
      <Space $w={12} />
      <Tool name="scroll" />
      <ToolCell $w={21}><Separator /></ToolCell>
      {["comment", "marker", "sign", "edit", "trash", "rotate"].map((n) => <Tool key={n} name={n} />)}
      <Space $w={424} />
      {["link", "mail", "user"].map((n) => <Tool key={n} name={n} />)}
    </ToolBar>
  </>
);

const Document = () => (
  <Viewer>
    <FirstPage>
      <Heading>Problema 3</Heading>
      <Paragraph $gap={24} $leading={45}>
        <Line $fill $w={1352} $track={-0.25}>
          Elaborar un programa que permita <Mark $track={-0.31}>ingresar el sueldo base de un vendedor</Mark> y <Mark $track={-0.4}>el importe de sus</Mark>
        </Line>
        <Line $track={-0.07}><Mark>ventas</Mark> que realizó durante un determinado mes.</Line>
      </Paragraph>
      <Paragraph $gap={17.5} $leading={46}>
        <Line $fill $w={1351}>Luego el programa debe calcular su comisión de sus ventas, esta comisión corresponde al</Line>
        <Line $track={-0.07}>8% del importe de sus ventas.</Line>
      </Paragraph>
      <Paragraph $gap={17.4} $leading={45}>
        <Line $fill $w={1353} $track={-0.08}>
          Finalmente debe <Mark $cyan>calcular</Mark> su <Mark $cyan $caret>sueldo neto</Mark>, el cual es la suma de su sueldo base y su comisión
        </Line>
        <Line>de venta.</Line>
      </Paragraph>
    </FirstPage>
    <PageGap />
    <SecondPage>
      <Svg w={121} h={65} box="63 75 363 195" fill="#1d1d1b" stroke="none">
        <path d="M116 75H424L409 97H127Q66 186 97 290H77Q43 172 116 75Z" />
        <path d="M145 123H392L384 144H156C125 185 128 230 155 270H127C100 225 108 165 145 123Z" />
        <path d="M178 170H378L375 192H185Q180 205 185 219H376V240H174Q148 205 178 170Z" />
        <path d="M150 267H385V275H150Z" />
      </Svg>
      <University>
        <UniversityLine $track={0.75}>Universidad</UniversityLine>
        <UniversityLine $track={1.35}>Continental</UniversityLine>
      </University>
    </SecondPage>
    <Annotation>
      <div>Sueldo base: ####.##</div>
      <div>Comision: ####.##</div>
      <div>Sueldo neto: #######</div>
      <PenDot />
    </Annotation>
  </Viewer>
);

const Tray = () => (
  <>
    <TrayCell $w={40} $up={5}><Label $track={-0.5}>ES</Label></TrayCell>
    <Space $w={20} />
    <TrayCell $w={26}>
      <Svg size={24} stroke="none">
        <circle cx="11" cy="12.500" r="10" fill="#fbb829" /><circle cx="9" cy="10" r="6" fill="#ffd35a" />
        <path d="M11 19A3.500 3.500 0 0 1 11.500 13A4.500 4.500 0 0 1 19 13.500A3 3 0 0 1 20 19Z" fill="#cfe2fa" />
        <path d="M16.500 2H20.500V9H16.500Z" fill="#d11b32" /><circle cx="18.500" cy="12" r="2" fill="#d11b32" />
      </Svg>
    </TrayCell>
    <Space $w={5} />
    <TrayCell $w={31}><Label $size={14} $track={-0.7}>21°C</Label></TrayCell>
    <Space $w={11} />
    <TrayCell><Svg w={13} h={8} box="0 0 13 8" sw={1.500}><path d="M1 7L6.500 1.500L12 7" /></Svg></TrayCell>
    <TrayCell>
      <Svg w={14} h={18} box="0 0 14 18" sw={1.300}><rect x="4" y="1" width="5" height="10" rx="1.500" fill="#fff" stroke="#fff" /><path d="M1.500 9V12Q1.500 14 6.500 14T11.500 12V9M6.500 14V17M3 17H10" /></Svg>
    </TrayCell>
    <TrayCell>
      <Svg size={18} sw={1.500}><path d="M2 5L22 2V15M2 5V20H13M6 20V22H12M9 14V9L13 12M15 8V13L11 11" /><circle cx="19" cy="20" r="5" fill="#2f78c8" stroke="none" /></Svg>
    </TrayCell>
    <TrayCell>
      <Svg w={18} h={14} box="0 0 18 14" sw={1.200}><path d="M6 4H16V11H4V8M16 6H17.500V9H16M1 1V4H5V1M3 4V7M2 0V1M4 0V1" /><path d="M7 6H14V9H6Z" fill="#fff" stroke="none" /></Svg>
    </TrayCell>
    <TrayCell>
      <Svg w={18} h={14} box="0 0 18 14" sw={1.200}><path d="M1 5H3.500L7 1.500V12.500L3.500 9H1ZM9.500 4.500Q11 7 9.500 9.500M12 3Q14.500 7 12 11M14.500 1.500Q18.500 7 14.500 12.500" /></Svg>
    </TrayCell>
    <Space $w={4} />
    <TrayCell>
      <Svg size={18} sw={1.500}><path d="M12 13L18 2L21 4L14 16L11 18ZM12 11Q5 9 3 14T6 20Q10 20 12 13M10 18Q12 22 15 18T20 14Q24 17 18 18" /></Svg>
    </TrayCell>
    <Space $w={3} />
    <Clock><Label $track={-0.5}>09:58</Label><Label $track={-0.6}>30/03/2022</Label></Clock>
    <Notification>
      <Svg w={16} h={15} box="0 0 16 15" stroke="none"><path d="M0 0H16V12H7L4 15V12H0Z" fill="#fff" /><path d="M3 3.500H13M3 6H13M3 8.500H10" stroke="#1d2b3a" /></Svg>
      <Badge>4</Badge>
    </Notification>
  </>
);

export default function App() {
  return (
    <Screen>
      <GlobalStyle />
      <Header />
      <Workspace>
        <SideNav>
          <Tool name="pages" $w={46} $h={46} />
          <Tool name="bookmark" $w={46} $h={48} />
          <Tool name="clip" $w={44} $h={44} />
        </SideNav>
        <Gutter $w={18}><Arrow /></Gutter>
        <Document />
        <ScrollTrack>
          <Svg w={8} h={7} box="0 0 8 7" sw={1.800} color="#777"><path d="M.8 5.500L4 1.500L7.200 5.500" /></Svg>
          <Thumb />
          <Svg w={8} h={7} box="0 0 8 7" sw={1.800} color="#777"><path d="M.8 1L4 5L7.200 1" /></Svg>
        </ScrollTrack>
        <Gutter $w={18}><Arrow /></Gutter>
        <ToolsPane>
          <Tool name="searchTools" />
          <PaneRule />
          {paneTools.map(([n, c]) => <Tool key={n} name={n} $color={c} />)}
          <Filler />
          <Tool name="expand" $w={40} />
        </ToolsPane>
      </Workspace>
      <TaskBar>
        <TrayCell $w={48}>
          <Svg size={16} box="0 0 16 16" stroke="none">
            <path d="M0 2.200L6.500 1.300V7.500H0ZM7.500 1.100L16 0V7.500H7.500ZM0 8.500H6.500V14.700L0 13.800ZM7.500 8.500H16V16L7.500 14.900Z" fill="#fff" />
          </Svg>
        </TrayCell>
        <SearchBox>
          <Svg size={17} box="0 0 17 17" sw={1.400}><circle cx="10.500" cy="6.500" r="5.300" /><path d="M6.500 10.500L1 16" /></Svg>
          <Label $size={14} $color="#d0d0d0" $track={0.05}>Escribe aquí para buscar</Label>
        </SearchBox>
        {taskApps.map((a) => (
          <TaskApp key={a.icon} $w={a.w} $active={a.active}>
            {art[a.icon]}
            {a.running && <RunningBar $active={a.active} $stacked={a.stacked} />}
          </TaskApp>
        ))}
        <Tray />
      </TaskBar>
    </Screen>
  );
}
